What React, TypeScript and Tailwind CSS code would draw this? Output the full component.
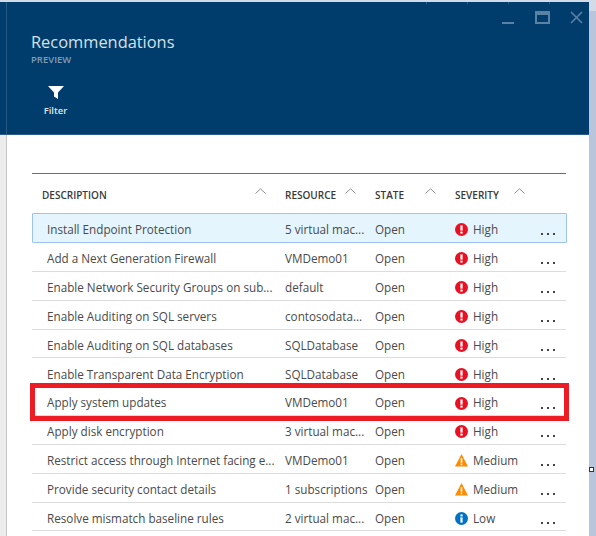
const rows = [
  { name: "Install Endpoint Protection", resource: "5 virtual mac...", severity: "High" },
  { name: "Add a Next Generation Firewall", resource: "VMDemo01", severity: "High" },
  { name: "Enable Network Security Groups on sub...", resource: "default", severity: "High" },
  { name: "Enable Auditing on SQL servers", resource: "contosodata...", severity: "High" },
  { name: "Enable Auditing on SQL databases", resource: "SQLDatabase", severity: "High" },
  { name: "Enable Transparent Data Encryption", resource: "SQLDatabase", severity: "High" },
  { name: "Apply system updates", resource: "VMDemo01", severity: "High" },
  { name: "Apply disk encryption", resource: "3 virtual mac...", severity: "High" },
  { name: "Restrict access through Internet facing e...", resource: "VMDemo01", severity: "Medium" },
  { name: "Provide security contact details", resource: "1 subscriptions", severity: "Medium" },
  { name: "Resolve mismatch baseline rules", resource: "2 virtual mac...", severity: "Low" },
];

function SeverityIcon({ level }: { level: string }) {
  if (level === "High") {
    return (
      <svg width="13" height="13" viewBox="0 0 13 13" className="shrink-0">
        <circle cx="6.5" cy="6.5" r="6.5" fill="#e81123" />
        <rect x="5.4" y="2.4" width="2.2" height="5.2" fill="#fff" />
        <rect x="5.4" y="8.6" width="2.2" height="2" fill="#fff" />
      </svg>
    );
  }
  if (level === "Medium") {
    return (
      <svg width="13" height="13" viewBox="0 0 13 13" className="shrink-0">
        <path d="M6.5 0 L13 12.5 H0 Z" fill="#ff8c00" />
        <rect x="5.7" y="4.2" width="1.6" height="4.6" fill="#fff" />
        <rect x="5.7" y="9.6" width="1.6" height="1.6" fill="#fff" />
      </svg>
    );
  }
  return (
    <svg width="13" height="13" viewBox="0 0 13 13" className="shrink-0">
      <circle cx="6.5" cy="6.5" r="6.5" fill="#0072c6" />
      <rect x="5.4" y="5.4" width="2.2" height="5.2" fill="#fff" />
      <rect x="5.4" y="2.4" width="2.2" height="2" fill="#fff" />
    </svg>
  );
}

function SortCaret() {
  return (
    <svg width="11" height="6" viewBox="0 0 11 6" className="shrink-0">
      <path d="M0.5 5.5 L5.5 0.8 L10.5 5.5" fill="none" stroke="#8a8f94" strokeWidth="1" />
    </svg>
  );
}

function Dots() {
  return (
    <div className="mt-[9px] flex gap-[4px]">
      <span className="h-[2px] w-[2px] bg-[#444]" />
      <span className="h-[2px] w-[2px] bg-[#444]" />
      <span className="h-[2px] w-[2px] bg-[#444]" />
    </div>
  );
}

export default function App() {
  return (
    <div
      className="relative flex h-[536px] w-[596px] flex-col overflow-hidden bg-[#b9c5da] text-[#4a4a4a]"
      style={{ fontFamily: '"Open Sans", "Noto Sans", sans-serif' }}
    >
      <div className="h-[2px] bg-[#d3dbe8]" />
      <div className="flex flex-1">
        <div className="flex w-[589px] flex-col">
          {/* blade header */}
          <div className="relative h-[133px] border-b border-[#2b5c88] bg-[#003c6c] pl-[31px] pt-[28px]">
            <div className="absolute bottom-0 left-[6px] top-0 w-px bg-[#275985]" />
            <div className="text-[16.4px] leading-[24px] text-[#d5e0ea]">Recommendations</div>
            <div className="text-[9.5px] font-semibold leading-[11px] text-[#7f9db8]">PREVIEW</div>
            <div className="ml-[13px] mt-[21px] flex w-[23px] flex-col items-center">
              <svg width="16" height="13" viewBox="0 0 16 13">
                <path d="M0 0 H16 L10 6.5 V13 L6 10.5 V6.5 Z" fill="#fff" />
              </svg>
              <div className="mt-[5px] text-[9.5px] font-semibold leading-[14px] text-[#dfe7ef]">Filter</div>
            </div>
            <div className="absolute left-[502px] top-[9px] flex items-start">
              <div className="mt-[11px] h-[2px] w-[12px] bg-[#5b82a5]" />
              <div className="ml-[21px] h-[13px] w-[15px] border-2 border-t-[4px] border-[#5b82a5]" />
              <svg width="13" height="13" viewBox="0 0 13 13" className="ml-[20px]">
                <path d="M1 1 L12 12 M12 1 L1 12" stroke="#5b82a5" strokeWidth="1.6" fill="none" />
              </svg>
            </div>
          </div>

          {/* blade body */}
          <div className="flex flex-1">
            <div className="w-[6px] bg-[#ececec]" />
            <div className="w-px bg-[#c4c4c4]" />
            <div className="flex-1 bg-white pl-[25px] pr-[23px] pt-[38px]">
              <div className="flex h-[40px] items-start border-t border-[#6e6e6e] text-[10px] font-semibold text-[#3a3a3a]">
                <div className="flex w-[253px] pl-[10px] pr-[19px] pt-[14px]">
                  <span className="flex-1 leading-[14px]">DESCRIPTION</span>
                  <SortCaret />
                </div>
                <div className="flex w-[90px] pr-[19px] pt-[14px]">
                  <span className="flex-1 leading-[14px]">RESOURCE</span>
                  <SortCaret />
                </div>
                <div className="flex w-[80px] pr-[19px] pt-[14px]">
                  <span className="flex-1 leading-[14px]">STATE</span>
                  <SortCaret />
                </div>
                <div className="flex w-[70px] pt-[14px]">
                  <span className="flex-1 leading-[14px]">SEVERITY</span>
                  <SortCaret />
                </div>
              </div>
              {rows.map((row, i) => (
                <div
                  key={row.name}
                  className={
                    i === 0
                      ? "-mr-px flex h-[30px] items-center rounded-[1px] border border-[#9cc4ee] bg-[#e5f5fd] pt-[3px] text-[11.7px]"
                      : "flex h-[28.85px] items-center border-b border-[#dcdcdc] pt-[4px] text-[11.7px]"
                  }
                >
                  <div className={i === 0 ? "w-[252px] truncate pl-[14px]" : "w-[253px] truncate pl-[15px]"}>{row.name}</div>
                  <div className="w-[90px] whitespace-nowrap">{row.resource}</div>
                  <div className="w-[80px]">Open</div>
                  <div className="flex w-[86px] items-center gap-[5px]">
                    <SeverityIcon level={row.severity} />
                    <span>{row.severity}</span>
                  </div>
                  <Dots />
                </div>
              ))}
            </div>
          </div>
        </div>
      </div>

      {/* window chrome bits along the top edge */}
      <div className="absolute left-[589px] top-0 h-[11px] w-[7px] bg-[#d3dbe8]" />
      <div className="absolute left-[426px] top-[2px] h-[2px] w-px bg-[#2b5c88]" />
      <div className="absolute left-[467px] top-[2px] h-[2px] w-px bg-[#2b5c88]" />
      <div className="absolute left-[508px] top-[2px] h-[2px] w-px bg-[#2b5c88]" />
      <div className="absolute left-[549px] top-[2px] h-[2px] w-px bg-[#2b5c88]" />
      {/* red annotation drawn over the screenshot */}
      <div className="absolute left-[30px] top-[383px] h-[38px] w-[539px] border-[5px] border-[#ed1c24]" />
      {/* resize handle */}
      <div className="absolute left-[589px] top-[467px] h-[5px] w-[5px] border border-[#333] bg-white" />
    </div>
  );
}
